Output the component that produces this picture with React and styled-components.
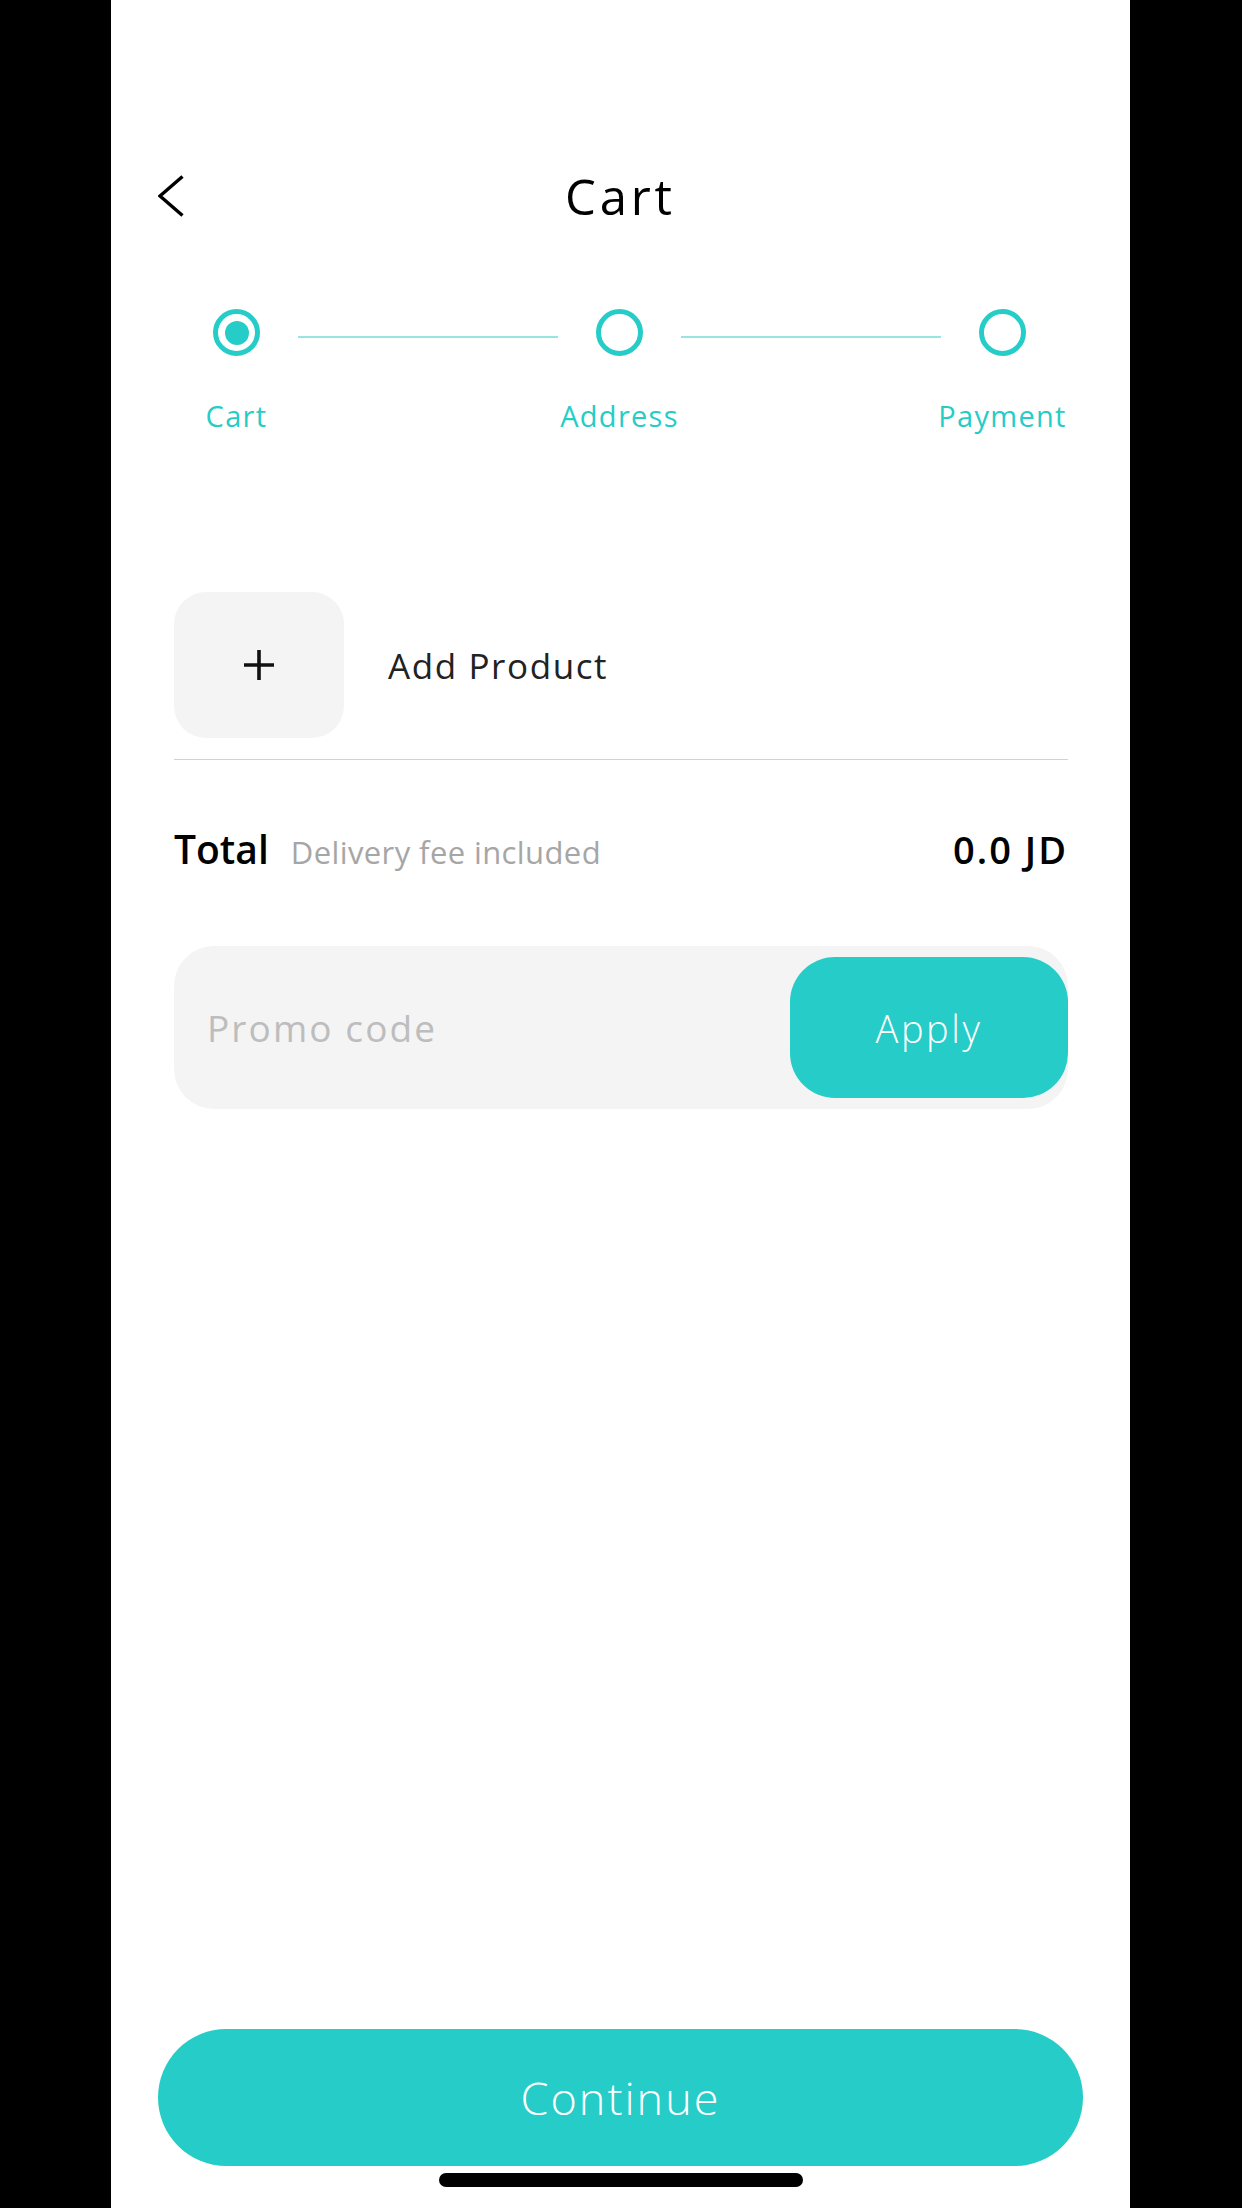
import React from "react";
import styled, { createGlobalStyle } from "styled-components";

const TEAL = "#26ccc7";
const FONT = `"Open Sans", "Noto Sans", sans-serif`;

const Global = createGlobalStyle`
  html, body { margin: 0; padding: 0; background: #000; }
  body { font-family: ${FONT}; }
  * { box-sizing: border-box; }
`;

const Phone = styled.div`
  width: 1019px;
  margin-left: 111px;
  min-height: 2208px;
  background: #fff;
  display: flex;
  flex-direction: column;
`;

const Header = styled.header`
  margin-top: 166px;
  height: 60px;
  display: grid;
  grid-template-columns: 1fr auto 1fr;
  align-items: center;
  padding: 0 47px;
`;

const BackButton = styled.button`
  justify-self: start;
  border: none;
  background: none;
  padding: 0;
  width: 26px;
  height: 42px;
  display: flex;
  cursor: pointer;
`;

const Title = styled.h1`
  margin: 0;
  font-size: 49px;
  line-height: 1;
  font-weight: 400;
  color: #000;
  letter-spacing: 3.8px;
`;

const StepRow = styled.div`
  margin-top: 83px;
  display: flex;
  align-items: flex-start;
  padding: 0 104px 0 102px;
`;

const Step = styled.div`
  flex: none;
  width: 47px;
  display: flex;
  flex-direction: column;
  align-items: center;
`;

const Circle = styled.div`
  width: 47px;
  height: 47px;
  border-radius: 50%;
  border: 5px solid ${TEAL};
  display: flex;
  align-items: center;
  justify-content: center;
`;

const Dot = styled.div`
  width: 24px;
  height: 24px;
  border-radius: 50%;
  background: ${TEAL};
`;

const Connector = styled.div`
  flex: 1;
  height: 2px;
  margin: 27px 38px 0;
  background: #97e5e2;
`;

const StepLabel = styled.span`
  margin-top: 45px;
  font-size: 29px;
  line-height: 1;
  color: ${TEAL};
  white-space: nowrap;
  letter-spacing: 1.3px;
`;

const Content = styled.main`
  padding: 0 62px 0 63px;
  display: flex;
  flex-direction: column;
`;

const AddRow = styled.div`
  margin-top: 162px;
  display: flex;
  align-items: center;
  gap: 44px;
`;

const AddTile = styled.button`
  width: 170px;
  height: 146px;
  border: none;
  border-radius: 32px;
  background: #f4f4f4;
  display: flex;
  align-items: center;
  justify-content: center;
  padding: 0;
  cursor: pointer;
`;

const AddText = styled.span`
  font-size: 35px;
  line-height: 1;
  color: #222;
  letter-spacing: 1.6px;
`;

const Divider = styled.hr`
  margin: 21px 0 0;
  border: none;
  height: 1px;
  background: #d2d2d2;
`;

const TotalRow = styled.div`
  margin-top: 69px;
  display: flex;
  align-items: baseline;
`;

const TotalLabel = styled.span`
  font-size: 39px;
  line-height: 1;
  font-weight: 600;
  color: #000;
`;

const Note = styled.span`
  margin-left: 22px;
  font-size: 31px;
  line-height: 1;
  color: #a6a6a6;
  letter-spacing: 0.4px;
`;

const Amount = styled.span`
  margin-left: auto;
  font-size: 38px;
  line-height: 1;
  font-weight: 600;
  color: #000;
  letter-spacing: 2px;
`;

const PromoBox = styled.div`
  margin-top: 78px;
  height: 163px;
  border-radius: 40px;
  background: #f4f4f4;
  display: flex;
  align-items: center;
  padding-left: 33px;
`;

const PromoInput = styled.input`
  flex: 1;
  min-width: 0;
  border: none;
  outline: none;
  background: transparent;
  font-family: ${FONT};
  font-size: 37px;
  color: #333;
  padding: 0;
  letter-spacing: 2.1px;
  &::placeholder { color: #bdbdbd; }
`;

const ApplyButton = styled.button`
  flex: none;
  width: 278px;
  height: 141px;
  border: none;
  border-radius: 45px;
  background: ${TEAL};
  color: #fff;
  font-family: ${FONT};
  font-size: 38px;
  font-weight: 300;
  letter-spacing: 2.6px;
  cursor: pointer;
`;

const Spacer = styled.div`
  flex: 1;
`;

const Footer = styled.footer`
  display: flex;
  flex-direction: column;
  align-items: center;
  padding: 0 47px 21px;
`;

const ContinueButton = styled.button`
  width: 100%;
  height: 137px;
  border: none;
  border-radius: 69px;
  background: ${TEAL};
  color: #fff;
  font-family: ${FONT};
  font-size: 45px;
  font-weight: 300;
  letter-spacing: 2px;
  cursor: pointer;
`;

const HomeIndicator = styled.div`
  margin-top: 7px;
  width: 364px;
  height: 14px;
  border-radius: 7px;
  background: #000;
`;

const steps = [
  { label: "Cart", active: true },
  { label: "Address" },
  { label: "Payment" },
];

export default function App() {
  return (
    <>
      <Global />
      <Phone>
        <Header>
          <BackButton aria-label="Back">
            <svg width="26" height="42" viewBox="0 0 26 42" fill="none">
              <polyline points="24.5,1.5 2,21 24.5,40.5" stroke="#000" strokeWidth="3.4" />
            </svg>
          </BackButton>
          <Title>Cart</Title>
          <span />
        </Header>

        <StepRow>
          {steps.map((s, i) => (
            <React.Fragment key={s.label}>
              {i > 0 && <Connector />}
              <Step>
                <Circle>{s.active && <Dot />}</Circle>
                <StepLabel>{s.label}</StepLabel>
              </Step>
            </React.Fragment>
          ))}
        </StepRow>

        <Content>
          <AddRow>
            <AddTile aria-label="Add product">
              <svg width="30" height="30" viewBox="0 0 30 30">
                <path d="M15 0V30M0 15H30" stroke="#111" strokeWidth="3.6" />
              </svg>
            </AddTile>
            <AddText>Add Product</AddText>
          </AddRow>
          <Divider />
          <TotalRow>
            <TotalLabel>Total</TotalLabel>
            <Note>Delivery fee included</Note>
            <Amount>0.0 JD</Amount>
          </TotalRow>
          <PromoBox>
            <PromoInput placeholder="Promo code" />
            <ApplyButton>Apply</ApplyButton>
          </PromoBox>
        </Content>

        <Spacer />

        <Footer>
          <ContinueButton>Continue</ContinueButton>
          <HomeIndicator />
        </Footer>
      </Phone>
    </>
  );
}
